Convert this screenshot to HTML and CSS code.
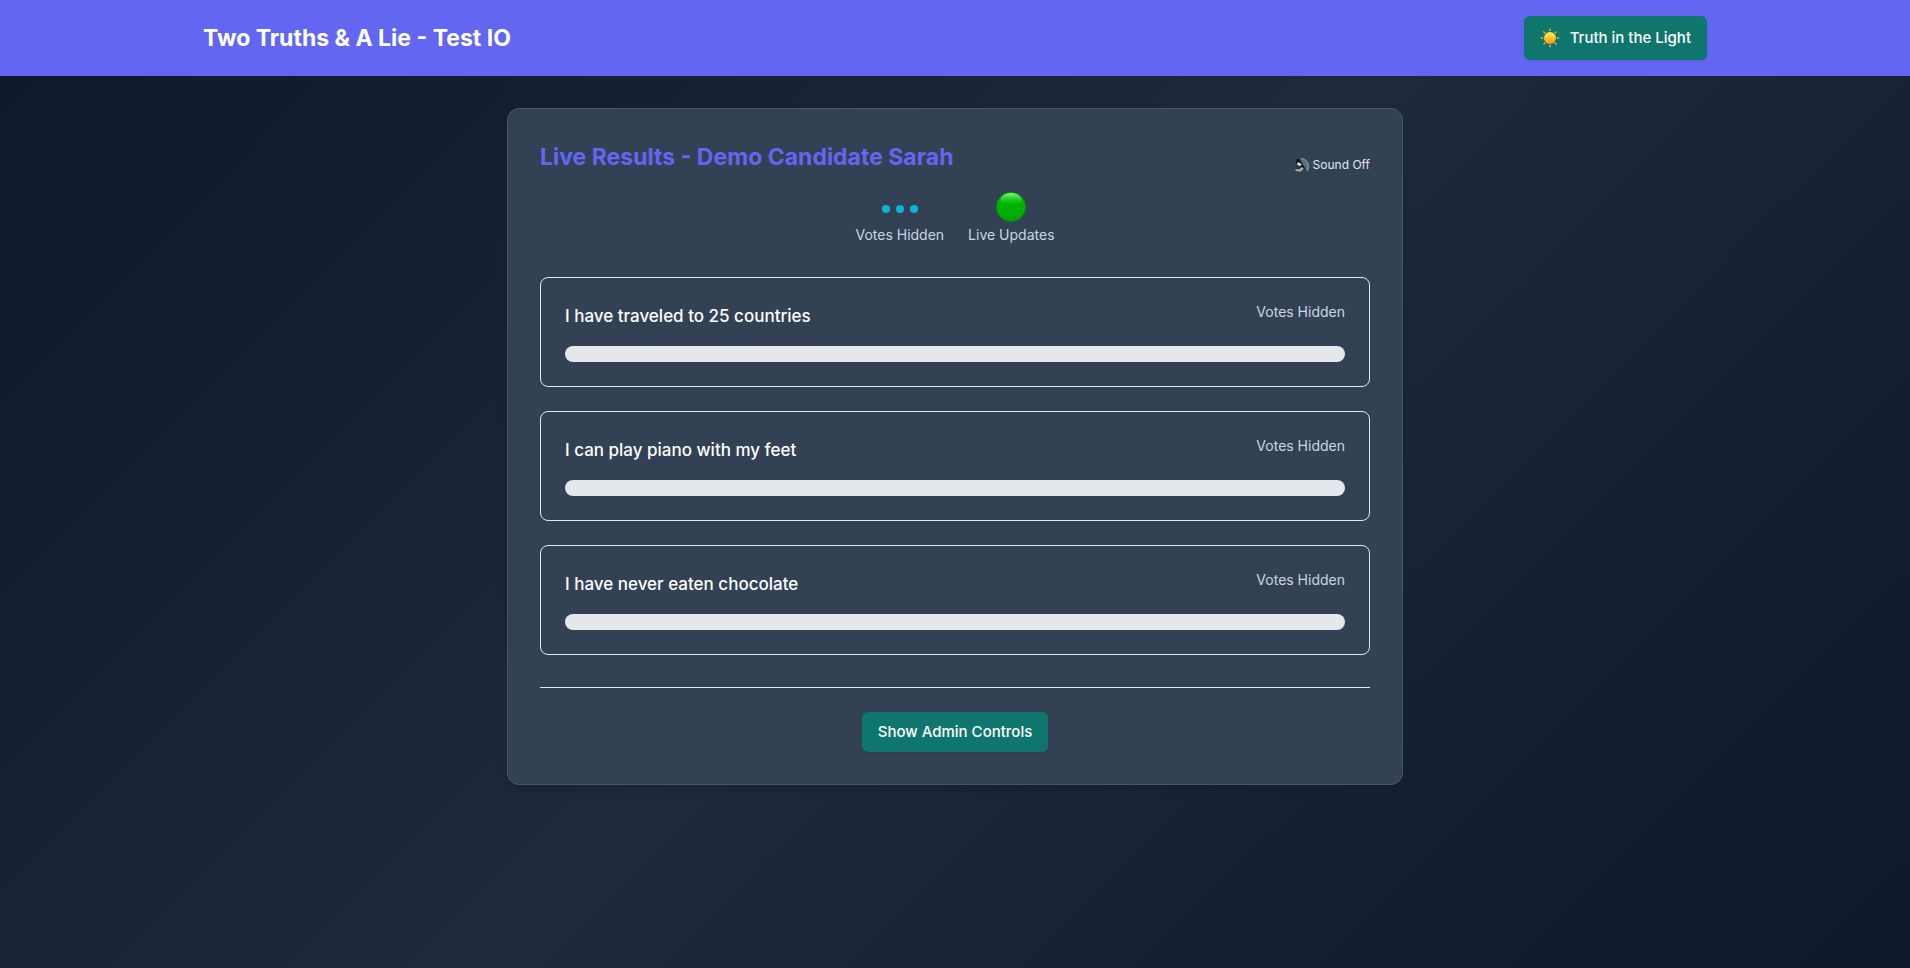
FILE: index.html
```html
<!DOCTYPE html>
<html lang="en">
<head>
<meta charset="utf-8">
<meta name="viewport" content="width=device-width, initial-scale=1">
<title>Two Truths &amp; A Lie - Test IO</title>
<link rel="stylesheet" href="styles.css">
</head>
<body>
<header class="site-header">
  <div class="header-inner">
    <h1 class="site-title">Two Truths &amp; A Lie - Test IO</h1>
    <button type="button" class="button theme-button">
      <svg class="sun" viewBox="0 0 20 20" aria-hidden="true">
        <defs><linearGradient id="sun-fill" x1="0" y1="0" x2="0" y2="1"><stop offset="0" stop-color="#fff04d"/><stop offset="0.5" stop-color="#fdc52c"/><stop offset="1" stop-color="#f99a1c"/></linearGradient></defs>
        <g fill="#f5a623">
          <path d="M10 0l1.200 3H8.800z"/>
          <path d="M10 0l1.200 3H8.800z" transform="rotate(45 10 10)"/>
          <path d="M10 0l1.200 3H8.800z" transform="rotate(90 10 10)"/>
          <path d="M10 0l1.200 3H8.800z" transform="rotate(135 10 10)"/>
          <path d="M10 0l1.200 3H8.800z" transform="rotate(180 10 10)"/>
          <path d="M10 0l1.200 3H8.800z" transform="rotate(225 10 10)"/>
          <path d="M10 0l1.200 3H8.800z" transform="rotate(270 10 10)"/>
          <path d="M10 0l1.200 3H8.800z" transform="rotate(315 10 10)"/>
        </g>
        <circle cx="10" cy="10" r="6" fill="url(#sun-fill)"/>
      </svg>
      <span>Truth in the Light</span>
    </button>
  </div>
</header>
<main class="page">
  <section class="panel">
    <div class="panel-head">
      <h2 class="panel-title">Live Results - Demo Candidate Sarah</h2>
      <button type="button" class="sound-button">
        <svg class="speaker" viewBox="0 0 15 15" aria-hidden="true">
          <path d="M6 1.200C10 .2 14 3.600 14.600 8c.2 2.400-.6 4.600-2 5.400L6.500 6z" fill="#526f80"/>
          <path d="M7 1.500c3 .2 6 4 6.200 7.300.1 2-.4 3.700-1.300 4.200" fill="none" stroke="#89a3b0" stroke-width=".8"/>
          <path d="M2.600 1.800c1.500-.7 3 .6 4.200 2.700l3.800 6.300-2.600 1.500-5.200-4.800C1.400 5.800 1.300 2.500 2.600 1.800z" fill="#18191b"/>
          <path d="M4 4.600l3.200 2.200-1.600 2-3-2z" fill="#d8dcdf"/>
          <path d="M.5 9.500l3.800-1 3.500 2.700-2 2.800-4.700-.4z" fill="#34383b"/>
          <path d="M1 11.200l3.800.5 2.700-2.400 1.800 1.600-3.500 2.900-4-.6z" fill="#a9aeb2"/>
        </svg>
        <span>Sound Off</span>
      </button>
    </div>
    <div class="status-row">
      <div class="status">
        <div class="status-icon dots" aria-hidden="true"><i class="dot"></i><i class="dot"></i><i class="dot"></i></div>
        <div class="status-label">Votes Hidden</div>
      </div>
      <div class="status">
        <div class="status-icon" aria-hidden="true">
          <svg class="live" viewBox="0 0 30 30">
            <defs>
              <linearGradient id="live-fill" x1="0" y1="0" x2="0" y2="1"><stop offset="0" stop-color="#16c512"/><stop offset="0.4" stop-color="#00b400"/><stop offset="0.75" stop-color="#00ae00"/><stop offset="1" stop-color="#0a970a"/></linearGradient>
              <linearGradient id="live-shine" x1="0" y1="0" x2="0" y2="1"><stop offset="0" stop-color="#7dff76"/><stop offset="1" stop-color="#00b800" stop-opacity="0"/></linearGradient>
            </defs>
            <circle cx="15" cy="15" r="14.500" fill="url(#live-fill)" stroke="#138a13"/>
            <ellipse cx="15" cy="7.500" rx="10.500" ry="6.500" fill="url(#live-shine)"/>
          </svg>
        </div>
        <div class="status-label">Live Updates</div>
      </div>
    </div>
    <div class="statements">
      <article class="statement">
        <div class="statement-head"><h3 class="statement-text">I have traveled to 25 countries</h3><span class="status-label">Votes Hidden</span></div>
        <div class="bar"></div>
      </article>
      <article class="statement">
        <div class="statement-head"><h3 class="statement-text">I can play piano with my feet</h3><span class="status-label">Votes Hidden</span></div>
        <div class="bar"></div>
      </article>
      <article class="statement">
        <div class="statement-head"><h3 class="statement-text">I have never eaten chocolate</h3><span class="status-label">Votes Hidden</span></div>
        <div class="bar"></div>
      </article>
    </div>
    <footer class="panel-foot">
      <button type="button" class="button">Show Admin Controls</button>
    </footer>
  </section>
</main>
</body>
</html>
```
FILE: styles.css
```css
* {
  box-sizing: border-box;
}

body {
  display: flex;
  flex-direction: column;
  min-height: 100vh;
  margin: 0;
  background: linear-gradient(135deg, #0f172a 0%, #1e293b 50%, #0f172a 100%);
  color: #ffffff;
  font-family: Inter, "Liberation Sans", sans-serif;
  font-size: 16px;
  line-height: 24px;
}

h1,
h2,
h3 {
  margin: 0;
}

button {
  border: 0;
  font: inherit;
  cursor: pointer;
}

.site-header {
  background: #6366f1;
}

.header-inner {
  display: flex;
  align-items: center;
  justify-content: space-between;
  max-width: 1536px;
  margin: 0 auto;
  padding: 16px;
}

.site-title,
.panel-title {
  font-size: 23px;
  font-weight: 700;
  line-height: 32px;
}

.button {
  padding: 8px 16px;
  border-radius: 6px;
  background: #0f766e;
  color: #ffffff;
  font-size: 15px;
  font-weight: 500;
  box-shadow: 0 1px 2px rgba(0, 0, 0, 0.1);
}

.theme-button {
  display: flex;
  align-items: center;
  gap: 10px;
  padding: 10px 16px;
}

.sun {
  width: 20px;
  height: 20px;
}

.page {
  padding: 32px 16px;
}

.panel {
  max-width: 896px;
  margin: 0 auto;
  padding: 32px;
  border: 1px solid #475569;
  border-radius: 12px;
  background: #334155;
  box-shadow: 0 4px 6px rgba(0, 0, 0, 0.1);
}

.panel-head {
  display: flex;
  align-items: flex-start;
  justify-content: space-between;
  margin-bottom: 12px;
}

.panel-title {
  color: #6366f1;
}

.sound-button {
  display: flex;
  align-items: center;
  gap: 3px;
  margin-top: 12px;
  padding: 4px 0;
  background: none;
  color: #e2e8f0;
  font-size: 12px;
  line-height: 16px;
}

.speaker {
  width: 16px;
  height: 16px;
}

.status-row {
  display: flex;
  justify-content: center;
  gap: 24px;
  margin-bottom: 32px;
}

.status {
  display: flex;
  flex-direction: column;
  align-items: center;
}

.status-icon {
  display: flex;
  align-items: center;
  height: 36px;
}

.dots {
  gap: 6px;
  padding-top: 4px;
}

.dot {
  width: 8px;
  height: 8px;
  border-radius: 50%;
  background: #06b6d4;
}

.live {
  width: 30px;
  height: 30px;
}

.status-label {
  color: #cbd5e1;
  font-size: 14px;
  line-height: 20px;
}

.statements {
  display: flex;
  flex-direction: column;
  gap: 24px;
}

.statement {
  padding: 24px;
  border: 1px solid #e5e7eb;
  border-radius: 8px;
}

.statement-head {
  display: flex;
  align-items: flex-start;
  justify-content: space-between;
  margin-bottom: 16px;
}

.statement-text {
  font-size: 17px;
  font-weight: 500;
  line-height: 28px;
}

.bar {
  height: 16px;
  border-radius: 8px;
  background: #e5e7eb;
}

.panel-foot {
  display: flex;
  justify-content: center;
  margin-top: 32px;
  padding-top: 24px;
  border-top: 1px solid #e5e7eb;
}
```
